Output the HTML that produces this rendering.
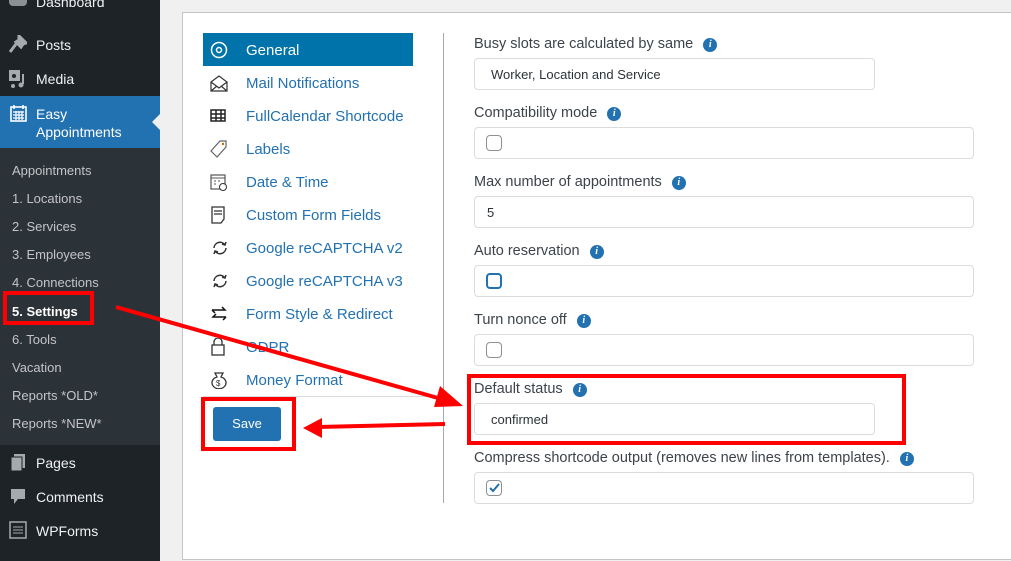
<!DOCTYPE html>
<html><head><meta charset="utf-8"><style>
*{box-sizing:border-box;margin:0;padding:0}
body{width:1011px;height:561px;overflow:hidden;background:#f0f0f1;font-family:"Liberation Sans",sans-serif;position:relative}
.abs{position:absolute}
#side{left:0;top:0;width:160px;height:561px;background:#1d2327}
.mi{position:absolute;left:36px;color:#f0f0f1;font-size:14px}
.sub{position:absolute;left:12px;color:#c3c4c7;font-size:13px}
#panel{left:182px;top:12px;width:840px;height:548px;background:#fff;border:1px solid #c3c4c7}
.nav{position:absolute;left:246px;font-size:15px;color:#2271b1}
.ic{position:absolute;left:210px}
.lbl{position:absolute;left:474px;font-size:14.5px;color:#3c434a}
.info{display:inline-block;width:14px;height:14px;border-radius:50%;background:#2271b1;color:#fff;font:bold italic 10px "Liberation Serif",serif;text-align:center;line-height:14px;margin-left:10px;vertical-align:1px}
.box{position:absolute;left:474px;width:500px;height:32px;border:1px solid #dcdcde;border-radius:4px;background:#fff}
.sel{width:401px;font-size:13px;color:#2c3338;padding:8px 0 0 16px}
.cb{position:absolute;left:11px;top:7px;width:16px;height:16px;border:1px solid #8c8f94;border-radius:4px}
.red{position:absolute;border:4px solid #f00}
</style></head><body>
<div id="side" class="abs">
 <div class="mi" style="top:-6px">Dashboard</div>
 <div class="abs" style="left:9px;top:-6px;width:18px;height:12px;background:#8c8f94;border-radius:4px"></div>
 <svg class="abs" style="left:9px;top:35px" width="18" height="18"><path d="M10 1l7 7-3 1-2 3-5-5 3-2zM7 9l-6 8" stroke="#a7aaad" stroke-width="3" fill="#a7aaad"/></svg>
 <div class="mi" style="top:37px">Posts</div>
 <svg class="abs" style="left:9px;top:70px" width="18" height="18"><rect x="0" y="0" width="11" height="11" fill="#a7aaad"/><circle cx="5" cy="6" r="2" fill="#1d2327"/><path d="M14 4v10" stroke="#a7aaad" stroke-width="2"/><circle cx="12" cy="15" r="2.5" fill="#a7aaad"/><circle cx="4" cy="16" r="2" fill="#a7aaad"/></svg>
 <div class="mi" style="top:71px">Media</div>
 <div class="abs" style="left:0;top:96px;width:160px;height:52px;background:#2271b1"></div>
 <svg class="abs" style="left:10px;top:104px" width="17" height="18"><rect x="1" y="3" width="15" height="14" fill="none" stroke="#fff" stroke-width="1.6"/><path d="M4 1v4M13 1v4" stroke="#fff" stroke-width="1.6"/><path d="M3 8h11M3 11h11M3 14h11M6 7v9M9 7v9M12 7v9" stroke="#fff" stroke-width="1.2"/></svg>
 <div class="mi" style="top:105px;color:#fff;line-height:18px">Easy<br>Appointments</div>
 <div class="abs" style="left:152px;top:114px;width:0;height:0;border:8px solid transparent;border-right-color:#f0f0f1;border-left:0"></div>
 <div class="abs" style="left:0;top:148px;width:160px;height:297px;background:#2c3338"></div>
 <div class="sub" style="top:163px">Appointments</div>
 <div class="sub" style="top:191px">1. Locations</div>
 <div class="sub" style="top:219px">2. Services</div>
 <div class="sub" style="top:247px">3. Employees</div>
 <div class="sub" style="top:275px">4. Connections</div>
 <div class="sub" style="top:304px;color:#fff;font-weight:bold">5. Settings</div>
 <div class="sub" style="top:332px">6. Tools</div>
 <div class="sub" style="top:360px">Vacation</div>
 <div class="sub" style="top:388px">Reports *OLD*</div>
 <div class="sub" style="top:416px">Reports *NEW*</div>
 <svg class="abs" style="left:10px;top:454px" width="16" height="18"><rect x="4" y="0" width="11" height="14" fill="#a7aaad"/><rect x="1" y="3" width="11" height="14" fill="#a7aaad" stroke="#1d2327"/></svg>
 <div class="mi" style="top:455px">Pages</div>
 <svg class="abs" style="left:10px;top:488px" width="16" height="18"><path d="M1 1h14v10H8l-4 5v-5H1z" fill="#a7aaad"/></svg>
 <div class="mi" style="top:489px">Comments</div>
 <svg class="abs" style="left:9px;top:521px" width="18" height="18"><rect x="1" y="1" width="16" height="16" fill="none" stroke="#a7aaad" stroke-width="1.5"/><path d="M4 6h10M4 9h10M4 12h10" stroke="#a7aaad"/></svg>
 <div class="mi" style="top:523px">WPForms</div>
</div>
<div id="panel" class="abs"></div>
<div class="abs" style="left:443px;top:33px;width:1px;height:470px;background:#a7aaad"></div>
<div class="abs" style="left:203px;top:33px;width:210px;height:33px;background:#0073aa"></div>
<svg class="abs" style="left:210px;top:41px" width="18" height="18"><circle cx="9" cy="9" r="7.5" fill="none" stroke="#fff" stroke-width="1.5"/><circle cx="9" cy="9" r="2.5" fill="none" stroke="#fff" stroke-width="1.5"/></svg>
<div class="nav" style="top:42px;color:#fff">General</div>
<svg class="ic" style="top:74px" width="18" height="18"><path d="M1 8l8-6 8 6v9H1z M1 8l8 6 8-6M1 17l6-5M17 17l-6-5" fill="none" stroke="#333" stroke-width="1.2"/></svg>
<div class="nav" style="top:75px">Mail Notifications</div>
<svg class="ic" style="top:108px" width="18" height="16"><rect x="1" y="2" width="14" height="11" fill="none" stroke="#222" stroke-width="1.5"/><path d="M1 6h14M1 10h14M6 2v11M11 2v11" stroke="#222" stroke-width="1.5"/></svg>
<div class="nav" style="top:108px">FullCalendar Shortcode</div>
<svg class="ic" style="top:140px" width="18" height="18"><path d="M10 1h6v6l-9 10-6-6z" fill="#fff" stroke="#666" stroke-width="1.2"/><circle cx="13" cy="4" r="1.2" fill="#c60"/></svg>
<div class="nav" style="top:141px">Labels</div>
<svg class="ic" style="top:173px" width="18" height="18"><rect x="1" y="2" width="14" height="14" fill="none" stroke="#555" stroke-width="1.2"/><path d="M1 5h14M4 8h2M8 8h2M4 11h2" stroke="#555"/><circle cx="13" cy="14" r="3.5" fill="#fff" stroke="#333"/></svg>
<div class="nav" style="top:174px">Date &amp; Time</div>
<svg class="ic" style="top:206px" width="18" height="18"><path d="M2 1h12v12l-3 4H2z" fill="#fff" stroke="#333" stroke-width="1.3"/><path d="M4 5h8M4 8h8" stroke="#555" stroke-width="1.5"/></svg>
<div class="nav" style="top:207px">Custom Form Fields</div>
<svg class="ic" style="top:239px" width="20" height="18"><path d="M4 9a6 6 0 0 1 11-3M16 9a6 6 0 0 1-11 3M12 5l3 1 1-3M8 13l-3-1-1 3" fill="none" stroke="#333" stroke-width="1.5"/></svg>
<div class="nav" style="top:240px">Google reCAPTCHA v2</div>
<svg class="ic" style="top:272px" width="20" height="18"><path d="M4 9a6 6 0 0 1 11-3M16 9a6 6 0 0 1-11 3M12 5l3 1 1-3M8 13l-3-1-1 3" fill="none" stroke="#333" stroke-width="1.5"/></svg>
<div class="nav" style="top:273px">Google reCAPTCHA v3</div>
<svg class="ic" style="top:305px" width="18" height="18"><path d="M2 5h13l-3-3M2 5l3 3M16 12H3l3-3M16 12l-3 3" fill="none" stroke="#111" stroke-width="1.5"/></svg>
<div class="nav" style="top:306px">Form Style &amp; Redirect</div>
<svg class="ic" style="top:338px" width="18" height="18"><rect x="2" y="7" width="12" height="10" fill="#fff" stroke="#333" stroke-width="1.3"/><path d="M4 7V4a4 4 0 0 1 8 0v3" fill="none" stroke="#333" stroke-width="1.3"/></svg>
<div class="nav" style="top:339px">GDPR</div>
<svg class="ic" style="top:371px" width="18" height="18"><path d="M5 2h8l-2 4a7 6 0 1 1-4 0z" fill="#fff" stroke="#333" stroke-width="1.3"/><text x="6" y="15" font-size="8" fill="#333">$</text></svg>
<div class="nav" style="top:372px">Money Format</div>
<div class="abs" style="left:203px;top:396px;width:240px;height:1px;background:#dcdcde"></div>
<div class="abs" style="left:213px;top:407px;width:68px;height:34px;background:#2271b1;border-radius:3px;color:#fff;font-size:13px;text-align:center;line-height:34px">Save</div>

<div class="lbl" style="top:36px">Busy slots are calculated by same<span class="info">i</span></div>
<div class="box sel" style="top:58px">Worker, Location and Service</div>
<div class="lbl" style="top:105px">Compatibility mode<span class="info">i</span></div>
<div class="box" style="top:127px"><div class="cb"></div></div>
<div class="lbl" style="top:174px">Max number of appointments<span class="info">i</span></div>
<div class="box" style="top:196px;font-size:13px;color:#2c3338;padding:8px 0 0 12px">5</div>
<div class="lbl" style="top:243px">Auto reservation<span class="info">i</span></div>
<div class="box" style="top:265px"><div class="cb" style="border:2px solid #2271b1"></div></div>
<div class="lbl" style="top:312px">Turn nonce off<span class="info">i</span></div>
<div class="box" style="top:334px"><div class="cb"></div></div>
<div class="lbl" style="top:381px">Default status<span class="info">i</span></div>
<div class="box sel" style="top:403px">confirmed</div>
<div class="lbl" style="top:450px">Compress shortcode output (removes new lines from templates).<span class="info">i</span></div>
<div class="box" style="top:472px"><div class="cb"><svg width="14" height="14" style="position:absolute;left:0;top:0"><path d="M3 7l3 3 6-7" fill="none" stroke="#2271b1" stroke-width="2"/></svg></div></div>

<div class="red" style="left:3px;top:291px;width:91px;height:34px"></div>
<div class="red" style="left:467px;top:374px;width:439px;height:71px"></div>
<div class="red" style="left:201px;top:397px;width:95px;height:54px"></div>
<svg class="abs" style="left:0;top:0" width="1011" height="561">
<line x1="116" y1="307" x2="445" y2="400" stroke="#f00" stroke-width="4"/>
<polygon points="463,406 440,386 434,407" fill="#f00"/>
<line x1="445" y1="424" x2="318" y2="427" stroke="#f00" stroke-width="4"/>
<polygon points="303,428 322,418 322,438" fill="#f00"/>
</svg>
</body></html>
